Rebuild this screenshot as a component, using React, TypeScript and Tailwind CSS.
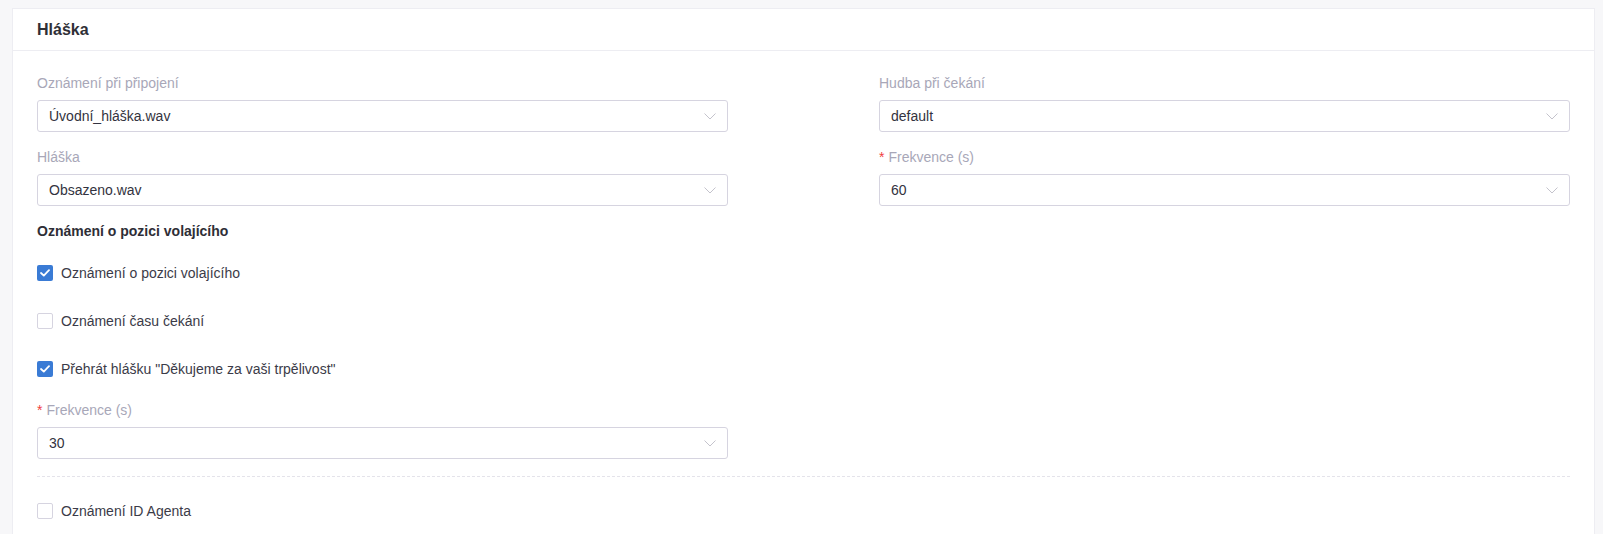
const font = { fontFamily: '"Liberation Sans", Arial, sans-serif' };

function Chevron() {
  return (
    <svg width="12" height="7" viewBox="0 0 12 7" fill="none" className="shrink-0">
      <path d="M0.5 0.5 L6 6 L11.5 0.5" stroke="#c4c3cc" strokeWidth="1" />
    </svg>
  );
}

function Field({ label, value, required }: { label: string; value: string; required?: boolean }) {
  return (
    <div>
      <div className="mb-[7px] h-5 text-sm leading-5 text-[#a8a7b8]">
        {required && <span className="mr-1 text-[#f04040]">*</span>}
        {label}
      </div>
      <div className="flex h-8 items-center justify-between rounded-[3px] border border-[#d6d4e0] bg-white pl-[11px] pr-[11px] text-sm text-[#333340]">
        <span>{value}</span>
        <Chevron />
      </div>
    </div>
  );
}

function Check({ label, checked }: { label: string; checked?: boolean }) {
  return (
    <label className="flex h-5 items-center gap-2 text-sm text-[#3b3b48]">
      {checked ? (
        <span className="grid h-4 w-4 place-items-center rounded-[2px] bg-[#3a7bd5]">
          <svg width="10" height="8" viewBox="0 0 10 8" fill="none">
            <path d="M1 4 L3.8 6.6 L9 1.2" stroke="white" strokeWidth="1.8" strokeLinecap="round" strokeLinejoin="round" />
          </svg>
        </span>
      ) : (
        <span className="h-4 w-4 rounded-[2px] border border-[#d6d4e0] bg-white" />
      )}
      {label}
    </label>
  );
}

export default function App() {
  return (
    <div className="min-h-[534px] bg-[#f7f7f9] pl-3 pr-2 pt-2" style={font}>
      <div className="border border-[#ededf2] bg-white">
        <div className="flex h-[42px] items-center border-b border-[#ededf2] px-6 text-base font-bold text-[#2f2f36]">
          Hláška
        </div>
        <div className="px-6 pt-[22px]">
          <div className="grid grid-cols-2 gap-x-[151px] gap-y-[15px]">
            <Field label="Oznámení při připojení" value="Úvodní_hláška.wav" />
            <Field label="Hudba při čekání" value="default" />
            <Field label="Hláška" value="Obsazeno.wav" />
            <Field label="Frekvence (s)" value="60" required />
          </div>
          <div className="mt-[15px] h-5 text-sm font-bold leading-5 text-[#2e2e36]">
            Oznámení o pozici volajícího
          </div>
          <div className="mt-[22px] flex flex-col gap-7">
            <Check label="Oznámení o pozici volajícího" checked />
            <Check label="Oznámení času čekání" />
            <Check label={'Přehrát hlášku "Děkujeme za vaši trpělivost"'} checked />
          </div>
          <div className="mt-[21px] w-[691px]">
            <Field label="Frekvence (s)" value="30" required />
          </div>
          <div className="mt-[17px] border-t border-dashed border-[#e4e3ea]" />
          <div className="mt-[24px] pb-6">
            <Check label="Oznámení ID Agenta" />
          </div>
        </div>
      </div>
    </div>
  );
}
